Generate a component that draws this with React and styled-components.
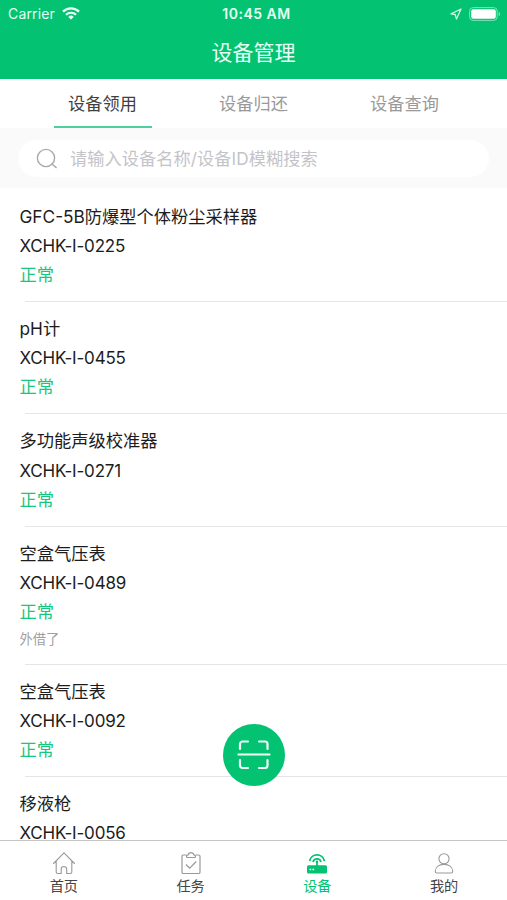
import React from 'react'
import styled, { createGlobalStyle } from 'styled-components'

const green = '#03c373';

const GlobalStyle = createGlobalStyle`
    * {
        box-sizing: border-box;
    }
    body {
        margin: 0;
        background: #fff;
        font-family: Inter, 'Noto Sans CJK SC', sans-serif;
    }
`;

const Screen = styled.div`
    position: relative;
    display: flex;
    flex-direction: column;
    height: 900px;
    overflow: hidden;
    background: #fff;
`;

// 顶部
const Header = styled.header`
    flex: none;
    height: 79px;
    background: ${green};
    color: #fff;
`;

const StatusBar = styled.div`
    display: grid;
    grid-template-columns: 1fr auto 1fr;
    align-items: center;
    height: 27px;
    padding: 0 6px 0 8px;
    font-size: 14px;
    line-height: 27px;
`;

const Carrier = styled.div`
    display: flex;
    align-items: center;
    gap: 7px;
    letter-spacing: 0.15px;
    line-height: 26px;
    color: #e4fff2;
`;

const Clock = styled.div`
    padding-left: 4px;
    font-size: 14px;
    font-weight: 600;
    letter-spacing: 0.5px;
    line-height: 26px;
    color: #e4fff2;
`;

const StatusIcons = styled.div`
    display: flex;
    align-items: center;
    justify-content: flex-end;
    gap: 7px;
`;

const PageTitle = styled.h1`
    margin: 0;
    font-size: 21px;
    font-weight: 400;
    line-height: 52px;
    text-align: center;
    color: #e9fff5;
`;

// 标签页
const Tabs = styled.nav`
    flex: none;
    display: flex;
    justify-content: center;
    gap: 53px;
    height: 49px;
`;

const Tab = styled.div`
    width: 98px;
    height: 49px;
    border-bottom: 2px solid ${props => props.$active ? '#4fcf9c' : 'transparent'};
    font-size: 17.2px;
    line-height: 49px;
    text-align: center;
    white-space: nowrap;
    color: ${props => props.$active ? '#404040' : '#999'};
`;

// 搜索
const SearchArea = styled.div`
    flex: none;
    height: 60px;
    padding: 12px 18px 11px;
    background: #fafafa;
`;

const SearchBox = styled.div`
    display: flex;
    align-items: center;
    gap: 12px;
    height: 37px;
    padding-left: 18px;
    border-radius: 19px;
    background: #fff;
    font-size: 17.2px;
    line-height: 36px;
    letter-spacing: 0.07px;
    color: #c4c4c8;
`;

// 设备列表
const List = styled.main`
    flex: 1;
    min-height: 0;
    overflow: hidden;
`;

const Item = styled.div`
    padding: 13px 0 11.5px 19.5px;
    font-size: 17.25px;
    line-height: 29.3px;
    color: #1c1c1c;
`;

const Code = styled.div`
    padding-top: 1px;
    margin-bottom: -1px;
    font-size: 17px;
    letter-spacing: -0.18px;
`;

const Status = styled.div`
    color: #18c680;
`;

const Note = styled.div`
    font-size: 13.3px;
    line-height: 25.6px;
    color: #a0a0a0;
`;

const Divider = styled.div`
    height: 1px;
    margin: 0 0 -1px 25px;
    background: #e6e6e6;
`;

// 分割线下移半像素后与列表起点对齐
const ListBody = styled.div`
    padding-top: 0.5px;
`;

const ScanButton = styled.button`
    position: absolute;
    left: 223px;
    top: 724px;
    display: flex;
    align-items: center;
    justify-content: center;
    width: 62px;
    height: 62px;
    padding: 0;
    border: 0;
    border-radius: 50%;
    background: ${green};
`;

// 底部导航
const BottomBar = styled.nav`
    flex: none;
    display: flex;
    height: 60px;
    border-top: 1px solid #c6c6c6;
    background: #fff;
`;

const BottomItem = styled.div`
    flex: 1;
    display: flex;
    flex-direction: column;
    align-items: center;
    padding: 10px 0 0 1px;
    font-size: 14.2px;
    line-height: 22px;
    color: ${props => props.$active ? green : '#444'};

    svg {
        color: ${props => props.$active ? green : '#999'};
    }
`;

const WifiIcon = () => (
    <svg width="18" height="13" viewBox="0 0 18 13" fill="none" stroke="#f2fff8" strokeWidth="2.2">
        <path d="M1 4.6a11.4 11.4 0 0 1 16 0" />
        <path d="M4 7.8a7.1 7.1 0 0 1 10 0" />
        <path d="M9 12.6 6.3 9.9a3.8 3.8 0 0 1 5.4 0z" fill="#f2fff8" stroke="none" />
    </svg>
)

const LocationIcon = () => (
    <svg width="12" height="12" viewBox="0 0 12 12" fill="none" stroke="#c9f7e1" strokeWidth="1.3" strokeLinejoin="round">
        <path d="M11 1 1 5.9l4.2.6 1.3 4.5z" />
    </svg>
)

const BatteryIcon = () => (
    <svg width="32" height="14" viewBox="0 0 32 14">
        <rect x=".6" y=".6" width="27.6" height="12.8" rx="3.5" fill="none" stroke="#7de4b4" strokeWidth="1" />
        <rect x="2.2" y="2.2" width="24.6" height="9.6" rx="2" fill="#fff" />
        <path d="M29.7 4.8c2 .8 2 3.6 0 4.4z" fill="#7de4b4" />
    </svg>
)

const SearchIcon = () => (
    <svg width="22" height="22" viewBox="0 0 22 22" fill="none" stroke="#aaa" strokeWidth="1.4" strokeLinecap="round">
        <circle cx="10" cy="10" r="8.6" />
        <path d="m16 16 4.2 3.6" />
    </svg>
)

const ScanIcon = () => (
    <svg width="34" height="32" viewBox="0 0 34 32" fill="none" stroke="#effff7" strokeWidth="2.2" strokeLinecap="round">
        <path d="M3 10V5a2.5 2.5 0 0 1 2.5-2.5H11M22 2.5h6A2.5 2.5 0 0 1 30.5 5v5M30.5 21v5.5A2.5 2.5 0 0 1 28 29h-6M11 29H5.5A2.5 2.5 0 0 1 3 26.5V21M1.5 15.5h31" />
    </svg>
)

const HomeIcon = () => (
    <svg width="24" height="24" viewBox="0 0 24 24" fill="none" stroke="currentColor" strokeWidth="1.1" strokeLinejoin="round" strokeLinecap="round">
        <path d="M1.5 12.5 12 1.8l10.5 10.7M4.2 10v11a1.5 1.5 0 0 0 1.5 1.5h3.5v-4.3a2.7 2.7 0 0 1 5.5 0v4.3h3.6a1.5 1.5 0 0 0 1.5-1.5V10" />
    </svg>
)

const TaskIcon = () => (
    <svg width="24" height="24" viewBox="0 0 24 24" fill="none" stroke="currentColor" strokeWidth="1.2" strokeLinejoin="round">
        <path d="M7.5 4H4.3A1.3 1.3 0 0 0 3 5.3v15.9a1.3 1.3 0 0 0 1.3 1.3h15.4a1.3 1.3 0 0 0 1.3-1.3V5.3A1.3 1.3 0 0 0 19.7 4h-3.2" />
        <path d="M8 6.5c-1-1.5-.5-2.5 1.2-2.7C9.7 1 14.3 1 14.8 3.8c1.7.2 2.2 1.2 1.2 2.7z" />
        <path d="m7 13.5 3.8 3.7 6.4-6.7" />
    </svg>
)

const DeviceIcon = () => (
    <svg width="24" height="24" viewBox="0 0 24 24" fill="none" stroke="currentColor" strokeWidth="1.8">
        <path d="M4.6 10.2a7.5 7.5 0 0 1 14.8 0M8 11a4.1 4.1 0 0 1 8 0" />
        <path d="M12 10v6" strokeWidth="1.8" />
        <circle cx="12" cy="10.8" r="1.3" fill="currentColor" stroke="none" />
        <rect x="2" y="14.2" width="20" height="8.2" rx="1.5" fill="currentColor" stroke="none" />
        <path d="M4.5 18.5h1.7M7.5 18.5h1.7" stroke="#fff" strokeWidth="1.6" />
    </svg>
)

const UserIcon = () => (
    <svg width="24" height="24" viewBox="0 0 24 24" fill="none" stroke="currentColor" strokeWidth="1.1">
        <circle cx="12" cy="7.8" r="5.1" />
        <path d="M3.3 20.5c0-4.3 3.5-7.1 8.7-7.1s8.7 2.8 8.7 7.1c0 1-.6 1.5-1.5 1.5H4.8c-.9 0-1.5-.5-1.5-1.5z" />
    </svg>
)

const devices = [
    { name: 'GFC-5B防爆型个体粉尘采样器', code: 'XCHK-I-0225', status: '正常' },
    { name: 'pH计', code: 'XCHK-I-0455', status: '正常' },
    { name: '多功能声级校准器', code: 'XCHK-I-0271', status: '正常' },
    { name: '空盒气压表', code: 'XCHK-I-0489', status: '正常', note: '外借了' },
    { name: '空盒气压表', code: 'XCHK-I-0092', status: '正常' },
    { name: '移液枪', code: 'XCHK-I-0056' },
]

export default function App() {
    return (
        <Screen>
            <GlobalStyle />
            <Header>
                <StatusBar>
                    <Carrier>Carrier <WifiIcon /></Carrier>
                    <Clock>10:45 AM</Clock>
                    <StatusIcons>
                        <LocationIcon />
                        <BatteryIcon />
                    </StatusIcons>
                </StatusBar>
                <PageTitle>设备管理</PageTitle>
            </Header>
            <Tabs>
                <Tab $active>设备领用</Tab>
                <Tab>设备归还</Tab>
                <Tab>设备查询</Tab>
            </Tabs>
            <SearchArea>
                <SearchBox>
                    <SearchIcon />
                    请输入设备名称/设备ID模糊搜索
                </SearchBox>
            </SearchArea>
            <List>
                <ListBody>
                    {devices.map(device => (
                        <React.Fragment key={device.code}>
                            <Item>
                                <div>{device.name}</div>
                                <Code>{device.code}</Code>
                                {device.status && <Status>{device.status}</Status>}
                                {device.note && <Note>{device.note}</Note>}
                            </Item>
                            {device.status && <Divider />}
                        </React.Fragment>
                    ))}
                </ListBody>
            </List>
            <ScanButton aria-label="扫码">
                <ScanIcon />
            </ScanButton>
            <BottomBar>
                <BottomItem><HomeIcon />首页</BottomItem>
                <BottomItem><TaskIcon />任务</BottomItem>
                <BottomItem $active><DeviceIcon />设备</BottomItem>
                <BottomItem><UserIcon />我的</BottomItem>
            </BottomBar>
        </Screen>
    );
}
